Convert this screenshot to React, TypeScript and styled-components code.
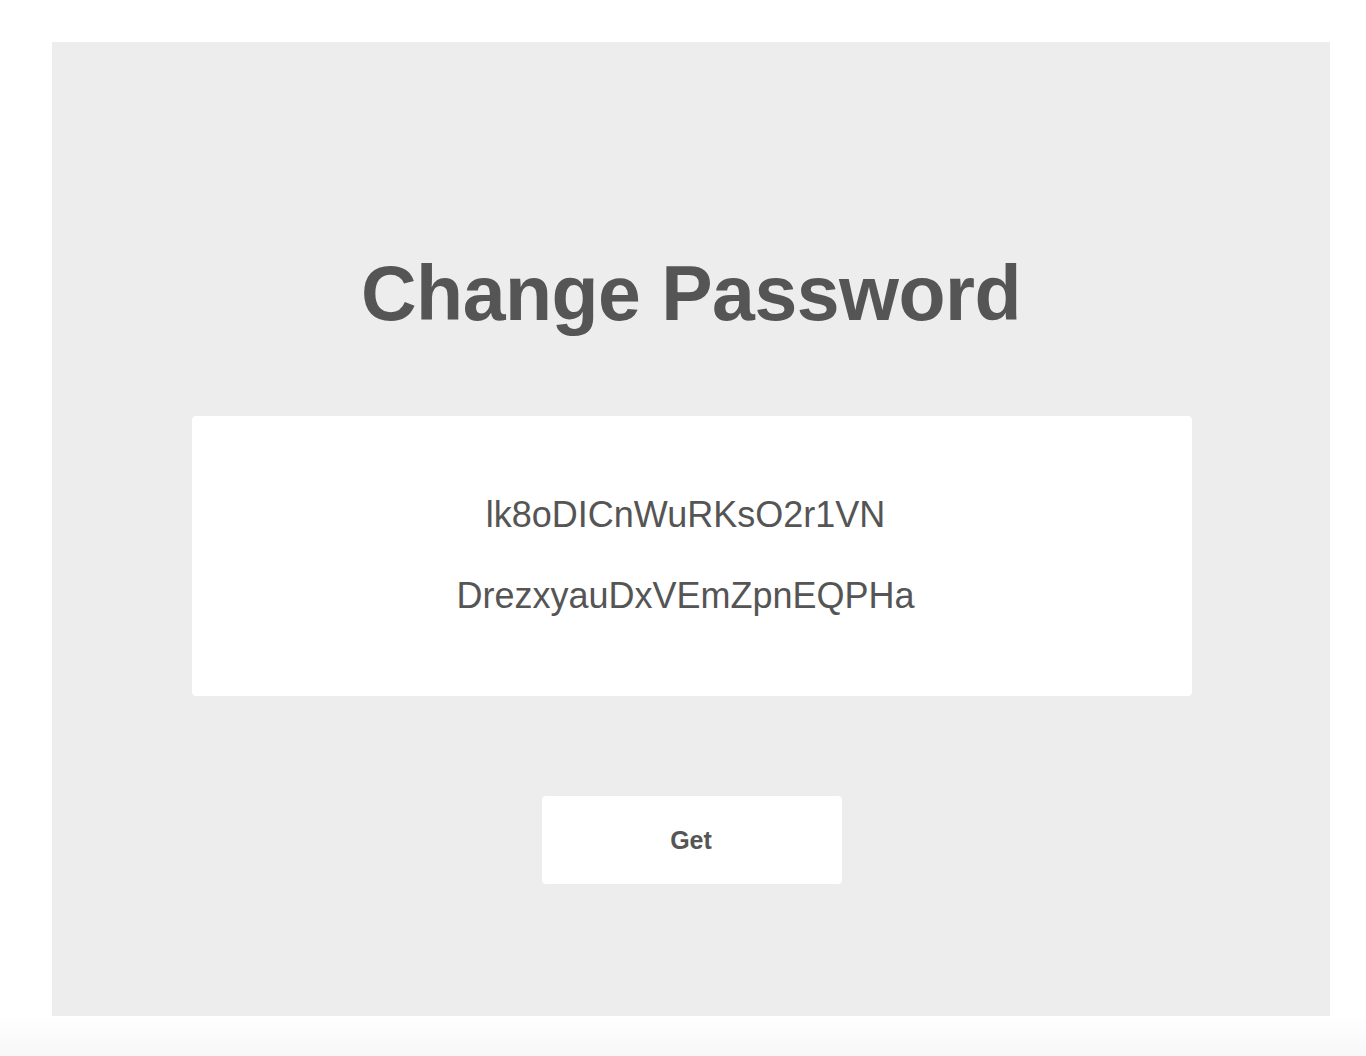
import React from "react";
import styled, { createGlobalStyle } from "styled-components";

const GlobalStyle = createGlobalStyle`
  html, body {
    margin: 0;
    padding: 0;
    background: #ffffff;
    font-family: "Liberation Sans", Arial, Helvetica, sans-serif;
  }
  * { box-sizing: border-box; }
`;

const Page = styled.div`
  display: flex;
  flex-direction: column;
  width: 1366px;
  height: 1056px;
  overflow: hidden;
`;

const Main = styled.main`
  display: flex;
  flex-direction: column;
  align-items: center;
  margin: 42px 36px 0 52px;
  height: 974px;
  padding: 213px 0 0 2px;
  background: #ededed;
  color: #555555;
`;

const Title = styled.h1`
  margin: 0 0 0 -2px;
  font-size: 77px;
  line-height: 77px;
  font-weight: 700;
  letter-spacing: -0.5px;
  color: #555555;
`;

const Card = styled.section`
  display: flex;
  flex-direction: column;
  align-items: center;
  gap: 45px;
  width: 1000px;
  height: 280px;
  margin-top: 84px;
  padding: 81px 13px 0 0;
  background: #ffffff;
  border-radius: 4px;
`;

const Code = styled.p`
  margin: 0;
  font-size: 36px;
  line-height: 36px;
  font-weight: 400;
  color: #555555;
`;

const GetButton = styled.button`
  display: flex;
  align-items: center;
  justify-content: center;
  width: 300px;
  height: 88px;
  margin-top: 100px;
  padding: 0 2px 0 0;
  border: none;
  border-radius: 4px;
  background: #ffffff;
  color: #555555;
  font-family: "Liberation Sans", Arial, Helvetica, sans-serif;
  font-size: 25px;
  font-weight: 700;
  cursor: pointer;
`;

const BottomFade = styled.div`
  height: 40px;
  background: linear-gradient(to bottom, #ffffff, #f7f7f7);
`;

export default function App() {
  const codes = ["lk8oDICnWuRKsO2r1VN", "DrezxyauDxVEmZpnEQPHa"];
  return (
    <>
      <GlobalStyle />
      <Page>
        <Main>
          <Title>Change Password</Title>
          <Card>
            {codes.map((c) => (
              <Code key={c}>{c}</Code>
            ))}
          </Card>
          <GetButton type="button">Get</GetButton>
        </Main>
        <BottomFade />
      </Page>
    </>
  );
}
